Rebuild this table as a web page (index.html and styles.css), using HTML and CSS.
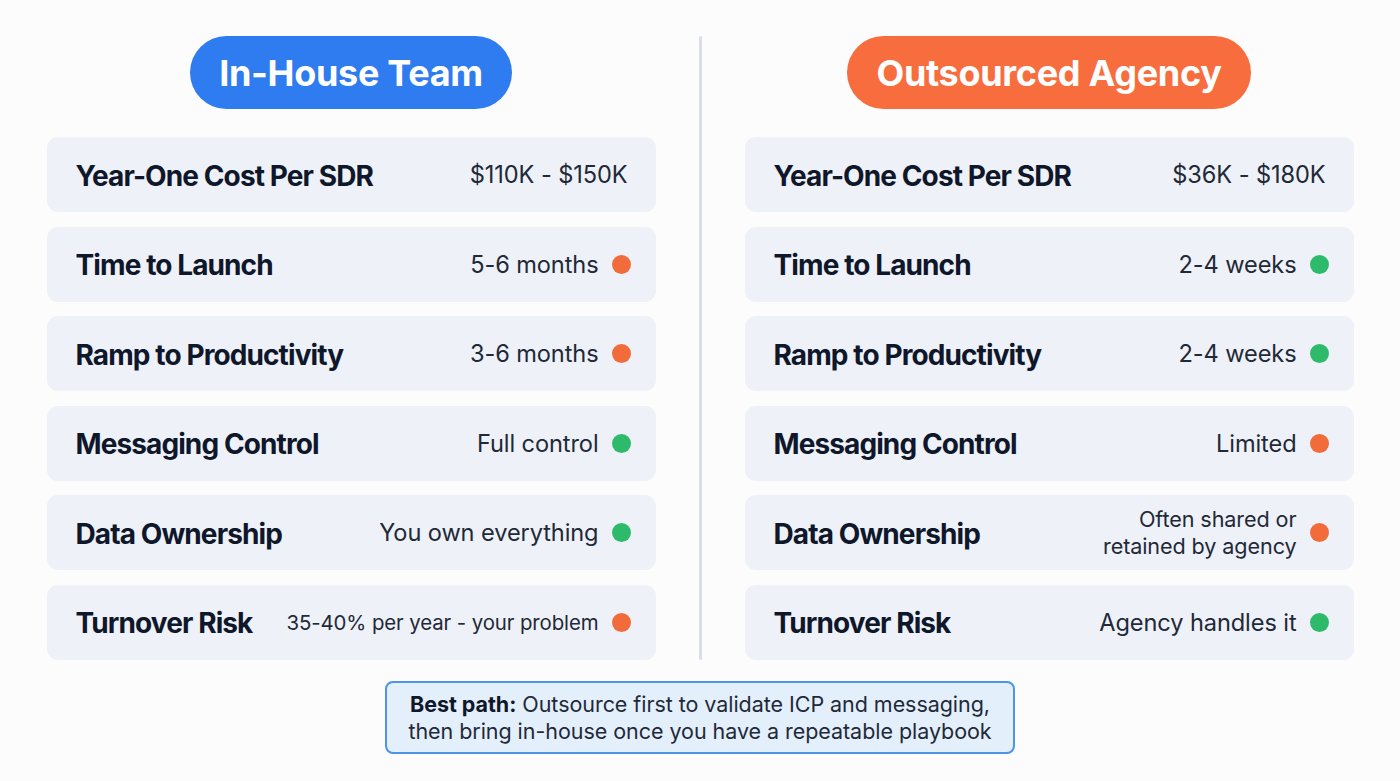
FILE: index.html
```html
<!DOCTYPE html>
<html lang="en">
<head>
<meta charset="utf-8">
<title>In-House Team vs Outsourced Agency</title>
<link rel="stylesheet" href="styles.css">
</head>
<body>
<main class="page">
  <div class="compare">
    <section class="column">
      <div class="pill pill-blue">In-House Team</div>
      <div class="rows">
        <div class="row"><span class="label">Year-One Cost Per SDR</span><span class="value nodot">$110K - $150K</span></div>
        <div class="row"><span class="label">Time to Launch</span><span class="value">5-6 months</span><span class="dot bad"></span></div>
        <div class="row"><span class="label">Ramp to Productivity</span><span class="value">3-6 months</span><span class="dot bad"></span></div>
        <div class="row"><span class="label">Messaging Control</span><span class="value">Full control</span><span class="dot good"></span></div>
        <div class="row"><span class="label">Data Ownership</span><span class="value">You own everything</span><span class="dot good"></span></div>
        <div class="row"><span class="label">Turnover Risk</span><span class="value small">35-40% per year - your problem</span><span class="dot bad"></span></div>
      </div>
    </section>
    <div class="divider"></div>
    <section class="column">
      <div class="pill pill-orange">Outsourced Agency</div>
      <div class="rows">
        <div class="row"><span class="label">Year-One Cost Per SDR</span><span class="value nodot">$36K - $180K</span></div>
        <div class="row"><span class="label">Time to Launch</span><span class="value">2-4 weeks</span><span class="dot good"></span></div>
        <div class="row"><span class="label">Ramp to Productivity</span><span class="value">2-4 weeks</span><span class="dot good"></span></div>
        <div class="row"><span class="label">Messaging Control</span><span class="value">Limited</span><span class="dot bad"></span></div>
        <div class="row"><span class="label">Data Ownership</span><span class="value two">Often shared or<br>retained by agency</span><span class="dot bad"></span></div>
        <div class="row"><span class="label">Turnover Risk</span><span class="value">Agency handles it</span><span class="dot good"></span></div>
      </div>
    </section>
  </div>
  <p class="note"><strong>Best path:</strong> Outsource first to validate ICP and messaging,<br>then bring in-house once you have a repeatable playbook</p>
</main>
</body>
</html>
```

FILE: styles.css
```css
* { box-sizing: border-box; }
html, body { margin: 0; padding: 0; }
body {
  width: 1400px;
  height: 781px;
  background: #fcfcfd;
  font-family: Inter, "Noto Sans", "Liberation Sans", sans-serif;
  color: #111827;
  overflow: hidden;
}
.page {
  display: flex;
  flex-direction: column;
  align-items: center;
  padding-top: 36px;
}
.compare {
  display: grid;
  grid-template-columns: 609px 3px 609px;
  column-gap: 43px;
}
.column {
  display: flex;
  flex-direction: column;
  align-items: center;
}
.divider {
  background: #d6dfeb;
  width: 3px;
  border-radius: 2px;
}
.pill {
  height: 73px;
  border-radius: 37px;
  display: flex;
  align-items: center;
  justify-content: center;
  color: #fff;
  font-weight: 700;
  font-size: 36px;
  letter-spacing: -0.3px;
  padding: 0 29px;
}
.pill-blue { background: #2f7cf0; }
.pill-orange { background: #f86d3d; }
.rows {
  margin-top: 28px;
  width: 609px;
  display: flex;
  flex-direction: column;
  gap: 14.6px;
}
.row {
  height: 75px;
  border-radius: 11px;
  background: #eef1f8;
  display: flex;
  align-items: center;
  padding: 0 25px 0 29px;
}
.label {
  font-weight: 700;
  font-size: 28px;
  letter-spacing: -0.9px;
  color: #0f172a;
  flex: 1;
  white-space: nowrap;
  padding-top: 2px;
}
.value {
  font-size: 23.6px;
  color: #1f2937;
  text-align: right;
  white-space: nowrap;
  letter-spacing: -0.1px;
}
.value.small { font-size: 20.4px; }
.value.two { font-size: 21.6px; line-height: 27px; }
.value.nodot { margin-right: 3px; }
.dot {
  width: 19px;
  height: 19px;
  border-radius: 50%;
  margin-left: 13px;
  flex: none;
}
.dot.bad { background: #f26b3a; }
.dot.good { background: #2dbb6b; }
.note {
  margin: 21px 0 0;
  width: 630px;
  height: 73px;
  background: #e4effc;
  border: 2px solid #4d93e6;
  border-radius: 8px;
  padding-top: 8px;
  text-align: center;
  font-size: 21.5px;
  line-height: 27px;
  color: #1f2937;
  letter-spacing: -0.05px;
}
.note strong { font-weight: 700; color: #0f172a; }
```
